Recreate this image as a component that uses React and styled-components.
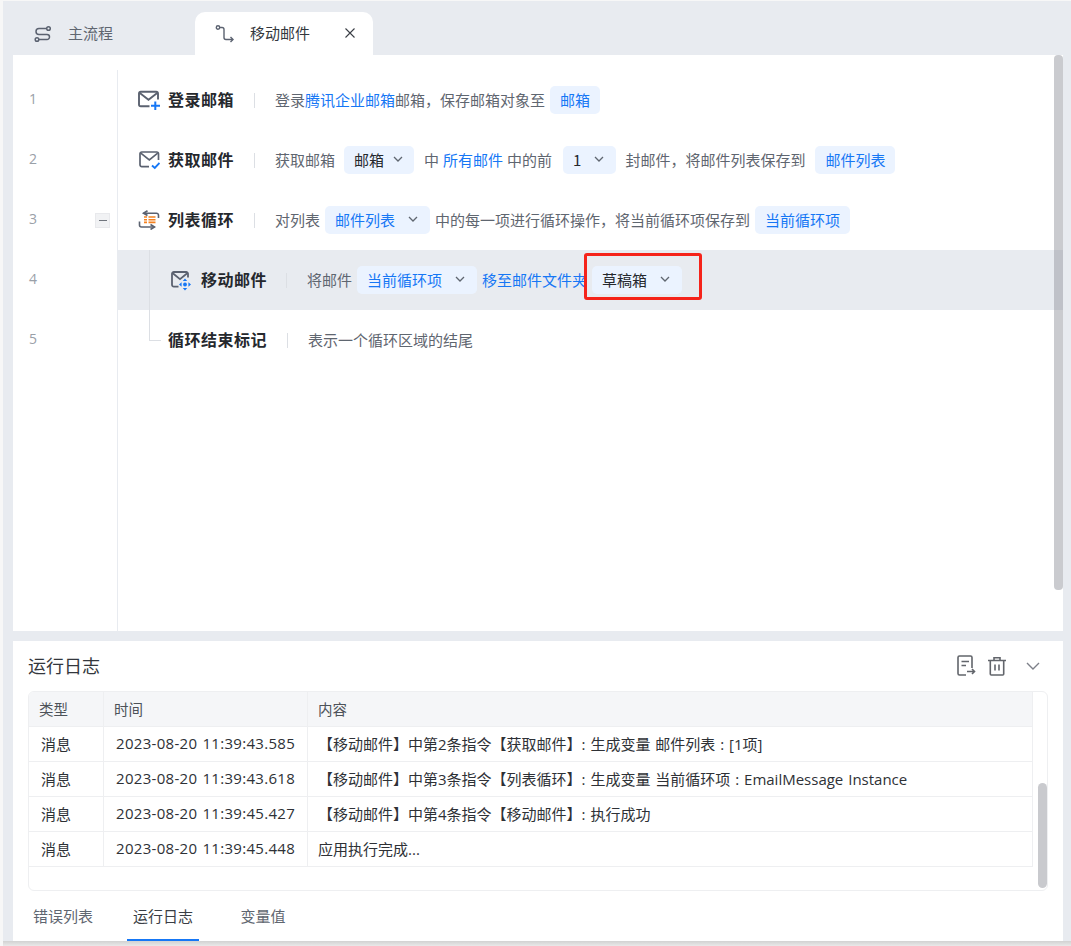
import React from "react";
import styled, { createGlobalStyle } from "styled-components";

const GlobalStyle = createGlobalStyle`
  * { box-sizing: border-box; }
  html, body { margin: 0; padding: 0; }
  body {
    font-family: "Noto Sans CJK SC", "Open Sans", sans-serif;
    background: #e8ebf0;
    overflow: hidden;
  }
`;

const Page = styled.div`
  position: relative;
  width: 1071px;
  height: 946px;
  padding: 1px 8px 0 10px;
  border-left: 3px solid #f7f7f7;
  border-top: 1px solid #f7f7f7;
  background: #e8ebf0;
  display: flex;
  flex-direction: column;
  overflow: hidden;
`;

const SideHandle = styled.div`
  position: absolute;
  left: -3px;
  top: 111px;
  width: 3px;
  height: 60px;
  border-radius: 0 3px 3px 0;
  background: #c4c5c9;
`;

const TabBar = styled.div`
  display: flex;
  height: 53px;
  align-items: flex-end;
`;

const Tab = styled.div`
  position: relative;
  display: flex;
  align-items: center;
  height: 43px;
  width: ${(p) => p.$width}px;
  padding: 0 0 2px 20px;
  font-size: 15px;
  color: ${(p) => (p.$active ? "#33373d" : "#5f6670")};
  background: ${(p) => (p.$active ? "#fff" : "transparent")};
  border-radius: 10px 10px 0 0;
`;

const TabIcon = styled.span`
  display: flex;
  width: 20px;
  margin-top: 2px;
  margin-right: 15px;
`;

const TabClose = styled.span`
  display: flex;
  margin-left: auto;
  margin-right: 17px;
`;

const EditorPanel = styled.div`
  position: relative;
  height: 576px;
  flex: none;
  background: #fff;
  padding-top: 15px;
  display: flex;
  flex-direction: column;
`;

const EditorScrollbar = styled.div`
  position: absolute;
  right: 0;
  top: 0;
  width: 9px;
  height: 535px;
  border-radius: 4px;
  background: rgba(150, 152, 160, 0.5);
`;

const Line = styled.div`
  display: flex;
  height: 60px;
  flex: none;
`;

const LineGutter = styled.div`
  display: flex;
  align-items: center;
  justify-content: space-between;
  width: 105px;
  padding: 0 7px 3px 16px;
  border-right: 1px solid #e8ebf0;
  font-size: 14px;
  font-family: "Open Sans", sans-serif;
  color: #9aa0a8;
`;

const GutterFill = styled.div`
  flex: 1;
  width: 105px;
  border-right: 1px solid #e8ebf0;
`;

const CollapseBox = styled.span`
  display: flex;
  align-items: center;
  justify-content: center;
  width: 15px;
  height: 15px;
  margin-top: 3px;
  background: #f1f2f4;
  border: 1px solid #e8e9ec;
  &::before {
    content: "";
    width: 8px;
    height: 1px;
    background: #70757d;
  }
`;

const LineBody = styled.div`
  position: relative;
  flex: 1;
  display: flex;
  align-items: center;
  padding: 0 0 2px ${(p) => p.$indent}px;
  background: ${(p) => (p.$active ? "#e8ebf0" : "transparent")};
  font-size: 15px;
  color: #5f6670;
  white-space: nowrap;
`;

const TreeLine = styled.span`
  position: absolute;
  left: 31px;
  top: 0;
  width: 1px;
  height: 100%;
  background: #dcdfe4;
`;

const TreeEnd = styled.span`
  position: absolute;
  left: 31px;
  top: 0;
  width: 12px;
  height: 31px;
  border-left: 1px solid #dcdfe4;
  border-bottom: 1px solid #dcdfe4;
`;

const CommandIcon = styled.span`
  display: flex;
  width: 22px;
  margin: 2px 8px 0 0;
`;

const CommandTitle = styled.span`
  width: ${(p) => p.$width || 66}px;
  font-size: 16px;
  font-weight: 700;
  letter-spacing: 0.5px;
  color: #25282d;
`;

const Divider = styled.span`
  width: 1px;
  height: 15px;
  background: #dcdfe4;
  margin: 2px 20px 0;
`;

const Seg = styled.span`
  margin: 0 ${(p) => p.$right || 0}px 0 ${(p) => p.$left || 0}px;
`;

const LinkText = styled(Seg)`
  color: #1677f5;
`;

const Pill = styled.span`
  display: inline-flex;
  align-items: center;
  height: 28px;
  margin: 2px 5px 0;
  padding: 0 ${(p) => (p.$menu ? 11 : 10)}px 2px 10px;
  gap: ${(p) => (p.$tight ? 8 : 12)}px;
  border-radius: 5px;
  background: #ebf3ff;
  color: ${(p) => (p.$link ? "#1677f5" : "#25282d")};
  font-size: 15px;
`;

const Annotated = styled.span`
  position: relative;
  display: inline-flex;
  &::after {
    content: "";
    box-sizing: border-box;
    position: absolute;
    left: -3px;
    top: -11px;
    width: 118px;
    height: 47px;
    border: 3px solid #f5231a;
    border-radius: 3px;
  }
`;

const LogPanel = styled.div`
  height: 300px;
  margin-top: 10px;
  flex: none;
  background: #fff;
  padding: 0 15px;
  display: flex;
  flex-direction: column;
`;

const LogHeader = styled.div`
  display: flex;
  align-items: center;
  height: 50px;
  flex: none;
`;

const LogTitle = styled.div`
  font-size: 18px;
  color: #33373d;
  padding-bottom: 3px;
`;

const LogActions = styled.div`
  display: flex;
  align-items: center;
  margin-left: auto;
  margin-right: 8px;
  gap: 12px;
`;

const FoldButton = styled.span`
  display: flex;
  margin-left: 8px;
`;

const TableBox = styled.div`
  position: relative;
  height: 200px;
  flex: none;
  border: 1px solid #eeeff1;
  border-radius: 6px;
  overflow: hidden;
  padding-right: 14px;
`;

const TableScrollbar = styled.div`
  position: absolute;
  right: 0;
  top: 91px;
  width: 9px;
  height: 105px;
  border-radius: 5px;
  background: #c9cace;
`;

const Row = styled.div`
  display: grid;
  grid-template-columns: 74px 204px 1fr;
  height: 35px;
  background: ${(p) => (p.$head ? "#f5f6f8" : "#fff")};
  border-bottom: 1px solid #eeeff1;
  border-right: 1px solid #eeeff1;
`;

const Cell = styled.div`
  display: flex;
  align-items: center;
  padding: 0 0 2px ${(p) => p.$pad}px;
  border-left: ${(p) => (p.$first ? "none" : "1px solid #eeeff1")};
  font-family: "Open Sans", "Noto Sans CJK SC", sans-serif;
  font-size: ${(p) => (p.$head ? 14.5 : 15)}px;
  letter-spacing: ${(p) => (p.$time ? 0.3 : 0)}px;
  word-spacing: 1px;
  color: ${(p) => (p.$head ? "#4d5259" : "#2e3136")};
  white-space: pre;
`;

const LogTabs = styled.div`
  display: flex;
  flex: 1;
  margin-left: -1px;
  gap: 28px;
`;

const LogTab = styled.div`
  display: flex;
  align-items: center;
  justify-content: center;
  width: 72px;
  font-size: 15px;
  color: ${(p) => (p.$active ? "#3a3e45" : "#5f6670")};
  border-bottom: 2px solid ${(p) => (p.$active ? "#1677f5" : "transparent")};
`;

const BottomEdge = styled.div`
  position: absolute;
  left: -3px;
  right: 0;
  bottom: 0;
  height: 5px;
  background: linear-gradient(#d2d2d2, #e9e9e9);
`;

const Chevron = () => (
  <svg width="12" height="12" viewBox="0 0 12 12" fill="none">
    <path d="M2 4l4 4 4-4" stroke="#5f6670" strokeWidth="1.3" />
  </svg>
);

const LoginIcon = () => (
  <svg width="22" height="20" viewBox="0 0 22 20" fill="none">
    <path d="M20 9.500V3.500A1.800 1.800 0 0 0 18.200 1.800H2.800A1.800 1.800 0 0 0 1 3.500v11a1.800 1.800 0 0 0 1.800 1.800H11.500" stroke="#5b6270" strokeWidth="1.900" />
    <path d="M1.800 3l8.700 6.800L19.200 3" stroke="#5b6270" strokeWidth="1.900" />
    <path d="M17.300 11.500v8.500M13 15.800h9" stroke="#1677f5" strokeWidth="2" />
  </svg>
);

const FetchIcon = () => (
  <svg width="22" height="20" viewBox="0 0 22 20" fill="none">
    <path d="M20.500 10V3.800A1.800 1.800 0 0 0 18.700 2H3.800A1.800 1.800 0 0 0 2 3.800v11a1.800 1.800 0 0 0 1.800 1.800H11" stroke="#5b6270" strokeWidth="1.700" />
    <path d="M2.800 3.200l8.500 6.600 8.400-6.600" stroke="#5b6270" strokeWidth="1.700" />
    <path d="M14 15.500l2.800 2.500 4.700-5" stroke="#1677f5" strokeWidth="1.900" />
  </svg>
);

const MoveIcon = () => (
  <svg width="22" height="21" viewBox="0 0 22 21" fill="none">
    <path d="M17 7.500V3.800A1.800 1.800 0 0 0 15.200 2H2.800A1.800 1.800 0 0 0 1 3.800v11a1.800 1.800 0 0 0 1.800 1.800H7.500" stroke="#5b6270" strokeWidth="1.800" />
    <path d="M1.800 3.200l7.200 6 7.200-6" stroke="#5b6270" strokeWidth="1.800" />
    <circle cx="14" cy="14.500" r="1.900" fill="#1677f5" />
    <path d="M14 8.500l2.200 2.600h-4.400zM14 20.500l-2.200-2.600h4.400zM8 14.500l2.600-2.200v4.400zM20 14.500l-2.600 2.200v-4.400z" fill="#1677f5" />
  </svg>
);

const LoopIcon = () => (
  <svg width="22" height="20" viewBox="0 0 22 20" fill="none">
    <path d="M9.500 0.700L5.500 3.200 9.500 5.500" stroke="#5b6270" strokeWidth="1.600" />
    <path d="M5.500 3.200H18.500A2 2 0 0 1 20.500 5.200V8" stroke="#5b6270" strokeWidth="1.600" />
    <path d="M1.500 11.500V15a2 2 0 0 0 2 2H16.500" stroke="#5b6270" strokeWidth="1.600" />
    <path d="M12.500 14.500l4 2.500-4 2.500" stroke="#5b6270" strokeWidth="1.600" />
    <path d="M6 7h3M10.500 7h7M6 9.700h3M10.500 9.700h7M6 12.400h3M10.500 12.400h7" stroke="#f58220" strokeWidth="1.600" />
  </svg>
);

const FlowIcon = () => (
  <svg width="20" height="20" viewBox="0 0 20 20" fill="none">
    <circle cx="15.500" cy="4.500" r="1.800" stroke="#5b6270" strokeWidth="1.500" />
    <circle cx="4" cy="15.500" r="1.800" stroke="#5b6270" strokeWidth="1.500" />
    <path d="M13.700 4.500H6a3 3 0 0 0 0 6h8a2.500 2.500 0 0 1 0 5H5.800" stroke="#5b6270" strokeWidth="1.500" />
  </svg>
);

const RouteIcon = () => (
  <svg width="20" height="20" viewBox="0 0 20 20" fill="none">
    <circle cx="3" cy="3.500" r="1.700" stroke="#5b6270" strokeWidth="1.400" />
    <path d="M4.700 3.500H7a2 2 0 0 1 2 2v8a2 2 0 0 0 2 2h6.500" stroke="#5b6270" strokeWidth="1.400" />
    <path d="M15.500 13l2.500 2.500-2.500 2.500" stroke="#5b6270" strokeWidth="1.400" />
  </svg>
);

const CloseIcon = () => (
  <svg width="12" height="12" viewBox="0 0 12 12" fill="none">
    <path d="M1.500 1.500l9 9M10.500 1.500l-9 9" stroke="#3a3e45" strokeWidth="1.100" />
  </svg>
);

const ExportIcon = () => (
  <svg width="19" height="22" viewBox="0 0 19 22" fill="none">
    <path d="M9 20H2.500A1.500 1.500 0 0 1 1 18.500v-16A1.500 1.500 0 0 1 2.500 1h11A1.500 1.500 0 0 1 15 2.500V13" stroke="#62656b" strokeWidth="1.600" />
    <path d="M4.500 6.500h7.500M4.500 10.500h4.500" stroke="#62656b" strokeWidth="1.600" />
    <path d="M10 16.500h7M15 14l2.500 2.500L15 19" stroke="#62656b" strokeWidth="1.600" />
  </svg>
);

const TrashIcon = () => (
  <svg width="18" height="20" viewBox="0 0 18 20" fill="none">
    <path d="M0 4.500h18M6 4V1.800h6V4" stroke="#62656b" strokeWidth="1.600" />
    <path d="M2.300 4.500V18a1 1 0 0 0 1 1h11.400a1 1 0 0 0 1-1V4.500" stroke="#62656b" strokeWidth="1.600" />
    <path d="M7 8.500v6M11 8.500v6" stroke="#62656b" strokeWidth="1.600" />
  </svg>
);

const FoldIcon = () => (
  <svg width="14" height="8" viewBox="0 0 14 8" fill="none">
    <path d="M1 1l6 6 6-6" stroke="#7d8089" strokeWidth="1.400" />
  </svg>
);

const logRows = [
  ["消息", "2023-08-20 11:39:43.585", "【移动邮件】中第2条指令【获取邮件】: 生成变量 邮件列表 : [1项]"],
  ["消息", "2023-08-20 11:39:43.618", "【移动邮件】中第3条指令【列表循环】: 生成变量 当前循环项 : EmailMessage Instance"],
  ["消息", "2023-08-20 11:39:45.427", "【移动邮件】中第4条指令【移动邮件】: 执行成功"],
  ["消息", "2023-08-20 11:39:45.448", "应用执行完成..."],
];

export default function App() {
  return (
    <Page>
      <GlobalStyle />
      <SideHandle />
      <TabBar>
        <Tab $width={182}>
          <TabIcon><FlowIcon /></TabIcon>
          主流程
        </Tab>
        <Tab $width={178} $active>
          <TabIcon><RouteIcon /></TabIcon>
          移动邮件
          <TabClose><CloseIcon /></TabClose>
        </Tab>
      </TabBar>

      <EditorPanel>
        <Line>
          <LineGutter>1</LineGutter>
          <LineBody $indent={20}>
            <CommandIcon><LoginIcon /></CommandIcon>
            <CommandTitle>登录邮箱</CommandTitle>
            <Divider />
            登录<LinkText>腾讯企业邮箱</LinkText>邮箱，保存邮箱对象至
            <Pill $link>邮箱</Pill>
          </LineBody>
        </Line>
        <Line>
          <LineGutter>2</LineGutter>
          <LineBody $indent={20}>
            <CommandIcon><FetchIcon /></CommandIcon>
            <CommandTitle>获取邮件</CommandTitle>
            <Divider />
            <Seg $right={4}>获取邮箱</Seg>
            <Pill $tight>邮箱<Chevron /></Pill>
            <Seg $left={5} $right={4}>中</Seg>
            <LinkText>所有邮件</LinkText>
            <Seg $left={4} $right={6}>中的前</Seg>
            <Pill $menu>1<Chevron /></Pill>
            <Seg $left={4} $right={5}>封邮件，将邮件列表保存到</Seg>
            <Pill $link>邮件列表</Pill>
          </LineBody>
        </Line>
        <Line>
          <LineGutter>3<CollapseBox /></LineGutter>
          <LineBody $indent={20}>
            <CommandIcon><LoopIcon /></CommandIcon>
            <CommandTitle>列表循环</CommandTitle>
            <Divider />
            对列表
            <Pill $link $menu>邮件列表<Chevron /></Pill>
            中的每一项进行循环操作，将当前循环项保存到
            <Pill $link>当前循环项</Pill>
          </LineBody>
        </Line>
        <Line>
          <LineGutter>4</LineGutter>
          <LineBody $indent={53} $active>
            <TreeLine />
            <CommandIcon><MoveIcon /></CommandIcon>
            <CommandTitle $width={65}>移动邮件</CommandTitle>
            <Divider />
            将邮件
            <Pill $link $menu>当前循环项<Chevron /></Pill>
            <LinkText>移至邮件文件夹</LinkText>
            <Annotated>
              <Pill $menu>草稿箱<Chevron /></Pill>
            </Annotated>
          </LineBody>
        </Line>
        <Line>
          <LineGutter>5</LineGutter>
          <LineBody $indent={50}>
            <TreeEnd />
            <CommandTitle $width={99}>循环结束标记</CommandTitle>
            <Divider />
            表示一个循环区域的结尾
          </LineBody>
        </Line>
        <GutterFill />
        <EditorScrollbar />
      </EditorPanel>

      <LogPanel>
        <LogHeader>
          <LogTitle>运行日志</LogTitle>
          <LogActions>
            <ExportIcon />
            <TrashIcon />
            <FoldButton><FoldIcon /></FoldButton>
          </LogActions>
        </LogHeader>
        <TableBox>
          <Row $head>
            <Cell $first $head $pad={10}>类型</Cell>
            <Cell $head $pad={10}>时间</Cell>
            <Cell $head $pad={10}>内容</Cell>
          </Row>
          {logRows.map((row) => (
            <Row key={row[1]}>
              <Cell $first $pad={12}>{row[0]}</Cell>
              <Cell $time $pad={12}>{row[1]}</Cell>
              <Cell $pad={10}>{row[2]}</Cell>
            </Row>
          ))}
          <TableScrollbar />
        </TableBox>
        <LogTabs>
          <LogTab>错误列表</LogTab>
          <LogTab $active>运行日志</LogTab>
          <LogTab>变量值</LogTab>
        </LogTabs>
      </LogPanel>
      <BottomEdge />
    </Page>
  );
}
